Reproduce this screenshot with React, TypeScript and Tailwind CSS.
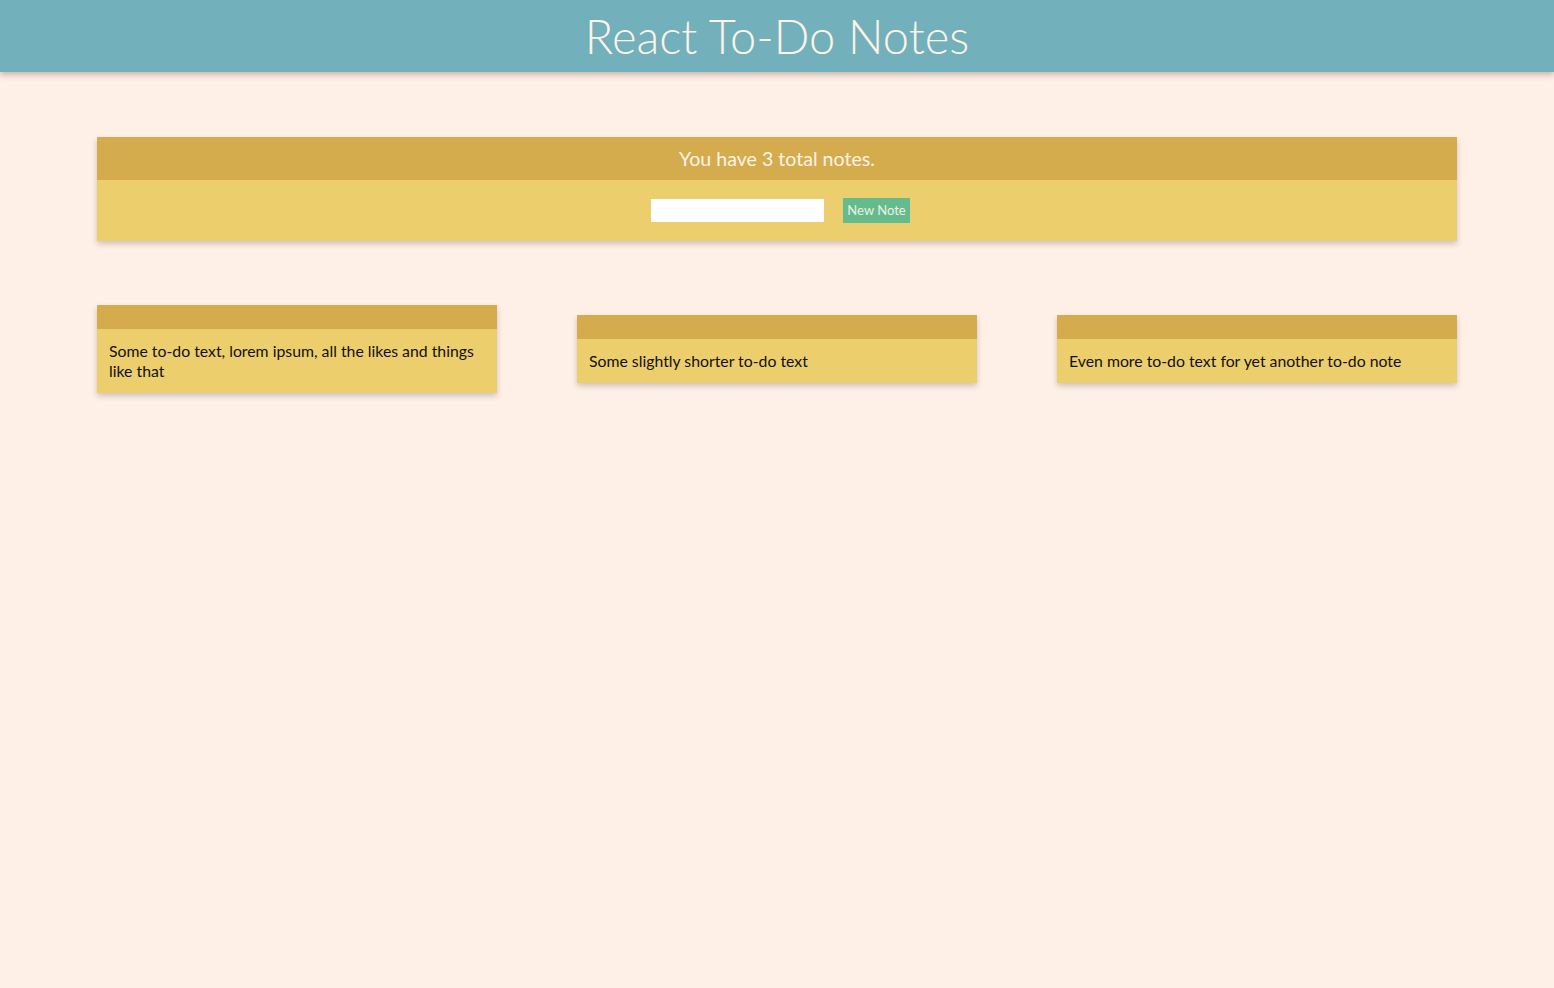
import React from "react";

const notes = [
  "Some to-do text, lorem ipsum, all the likes and things like that",
  "Some slightly shorter to-do text",
  "Even more to-do text for yet another to-do note",
];

export default function App() {
  return (
    <div className="min-h-[988px] bg-[#fff0e7] font-['Lato',sans-serif]">
      <header className="h-[72px] bg-[#72b0bb] flex items-center justify-center shadow-[0_3px_6px_rgba(80,50,30,0.3)] relative z-10">
        <h1 className="text-[47px] font-light text-[#fdf3e7] leading-none">React To-Do Notes</h1>
      </header>
      <main className="w-[1360px] mx-auto pt-[65px]">
        <section className="shadow-[0_3px_6px_rgba(0,0,0,0.2)]">
          <div className="h-[43px] bg-[#d5ac4d] flex items-center justify-center text-[19.6px] text-[#fdf3e7]">
            You have 3 total notes.
          </div>
          <div className="h-[61px] bg-[#edce6d] flex items-center justify-center gap-[19px] pl-[7px]">
            <input className="w-[173px] h-[23px] bg-white border-0 outline-none" />
            <button className="h-[25px] px-[4.5px] bg-[#64bc8e] text-[13px] text-[#f3efe0]">New Note</button>
          </div>
        </section>
        <div className="mt-[64px] flex items-center justify-between">
          {notes.map((n) => (
            <div key={n} className="w-[400px] shadow-[0_3px_6px_rgba(0,0,0,0.2)]">
              <div className="h-[24px] bg-[#d5ac4d]" />
              <div className="bg-[#edce6d] px-[12px] py-[12px] text-[15.8px] leading-[20px] text-[#111]">{n}</div>
            </div>
          ))}
        </div>
      </main>
    </div>
  );
}
